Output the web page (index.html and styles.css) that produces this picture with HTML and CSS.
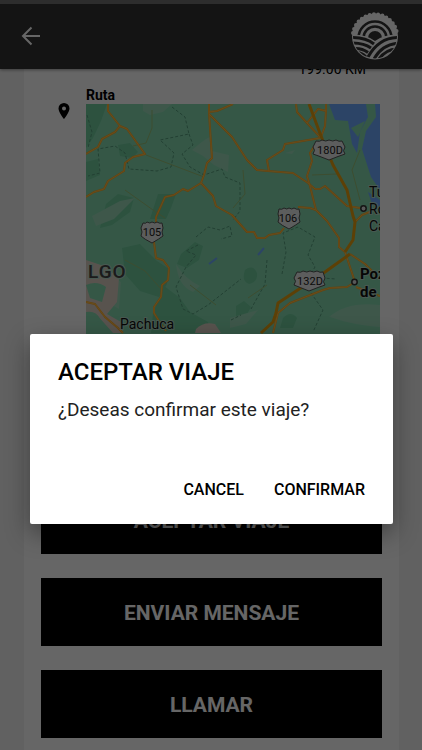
FILE: index.html
```html
<!DOCTYPE html>
<html lang="es">
<head>
<meta charset="utf-8">
<meta name="viewport" content="width=device-width, initial-scale=1">
<title>Aceptar viaje</title>
<link rel="stylesheet" href="styles.css">
</head>
<body>
<div class="app">
  <header class="topbar">
    <button class="back" type="button" aria-label="Volver">
      <svg width="20" height="20" viewBox="0 0 20 20" fill="none" stroke="currentColor" stroke-width="2"><path d="M20 10H3M11.500 1.500L3 10l8.500 8.500"/></svg>
    </button>
    <svg class="logo" viewBox="0 0 48 48" aria-hidden="true">
      <defs>
        <clipPath id="disc"><circle cx="24" cy="24.500" r="22"/></clipPath>
      </defs>
      <circle cx="24" cy="24.500" r="23" fill="#fff"/>
      <path d="M2 21A22.300 22.300 0 0 1 46 21" fill="none" stroke="#fff" stroke-width="4" stroke-linecap="round" stroke-dasharray="0 4.300"/>
      <g clip-path="url(#disc)">
        <g fill="none" stroke="#333" stroke-width="2.600">
          <circle cx="24" cy="26" r="16.500"/>
          <circle cx="24" cy="26" r="11.500"/>
        </g>
        <circle cx="24" cy="26" r="7" fill="#333"/>
        <path d="M0 22.500Q15 22 24 29Q33 22 48 22.500V48H0z" fill="#fff"/>
        <g fill="none" stroke="#333" stroke-width="3">
          <path d="M1 25.500Q15 25.500 23 32"/>
          <path d="M1 31Q13 31 20 36"/>
          <path d="M3 36.500Q11 36 17 40.500"/>
          <path d="M5 41Q10 40 15 45"/>
          <path d="M47 25.500Q28 25.500 17 45"/>
          <path d="M48 31Q31 32 23 47"/>
          <path d="M47 37Q35 37 28 47"/>
        </g>
      </g>
    </svg>
  </header>

  <main class="content">
    <section class="card">
      <p class="distance">199.00 KM</p>
      <div class="route">
        <svg class="pin" width="12" height="16" viewBox="0 0 12 16" aria-hidden="true"><path fill-rule="evenodd" d="M6 0a5.500 5.500 0 0 0-5.500 5.500C.5 9.500 6 16 6 16s5.500-6.500 5.500-10.500A5.500 5.500 0 0 0 6 0zm0 3.500a2 2 0 1 1 0 4 2 2 0 0 1 0-4z"/></svg>
        <div class="route-body">
          <h2 class="route-title">Ruta</h2>
          <svg class="map" viewBox="86 104 294 357" preserveAspectRatio="xMidYMin slice" role="img" aria-label="Mapa de la ruta">
            <defs>
              <g id="roads">
                <path d="M108 104v7l12 15 7 3 18 25-12 3-8 6-1 8-16 10-4 8-10 3-8 5M120 126l-5 6-13 7-4 8-12 7"/>
                <path d="M209 104v9l3 45-5 5-3 12-3 8-13 8-5-2-9 6-9 2-9 20v6M209 112l8-1 16-7M209 114l23 23 15 23 10 10 11 1 25 2 15 10 7 6h5l5-3 22 20 13 2"/>
                <path d="M201 183l12 13 3 10 7 4 9 5 15 17h7l3 6h8l4-3 11-2 4-5M154 242l2 16 7 2 6 8-1 12-6 5-1 12-7 10v6l5 8 7 10"/>
                <path d="M86 302l9 2 10 13 13 11 5 5M296 104l1 8 10 11 13 14M307 123l11-14 8 2v-7M326 111l-1 15-4 11M320 138l-35 6-2 6-16 10 2 11"/>
                <path d="M315 145l-5 8 2 8-5 15 3 10 6 24 5 5 6 6 12 17v9l6 5 10 30-8 5-17 1-7 2-33 13-12 10-5 20M298 207l12 1 6 2M350 254l15 10 15 15M356 287l24 9M355 222l7-7 10-4"/>
              </g>
            </defs>
            <rect x="86" y="104" width="294" height="357" fill="#84dab0"/>
            <g fill="#70cd9e">
              <path d="M86 104h21l-6 17-8 17-7 10z"/>
              <path d="M118 145l12-2 8 9-6 6-12-2zM86 162l12-3 2 16-14 6z"/>
              <path d="M106 204l12-10 16 4-4 14-18 13-12 3z"/>
              <path d="M158 194h18l-5 14-5 11h-16z"/>
              <path d="M122 248l18-4 17 17 12 8-2 15-8 13-19-6-15-17z"/>
              <path d="M181 254l14-12 8 4-4 14-12 8-10-4z"/>
              <path d="M164 286l16 12 10 14 18 10 3 11h-60l2-20z"/>
              <path d="M245 270q8-6 12 3 1 9-8 11-8-3-4-14zM283 318q8-8 14 0l-4 10h-13z"/>
              <path d="M236 306l8-5 7 6-5 9-10 3z"/>
            </g>
            <g fill="#9bd9b9">
              <path d="M143 104h29l-9 8-13 3-7-4zM192 150q14-12 18-13l2 14 17 4-1 17-14-7-11-9z"/>
              <path d="M92 216l28-15 15-3-21 21-18 7zM105 272l16 10-2 27-16-9zM176 264q9 15 24 22l-7 6q-15-6-17-28z"/>
              <path d="M329 317q18-16 51-12v22q-28-2-50-10zM285 153l10-3-3 4z"/>
              <path d="M230 318l28-8-12 14-16 4z"/>
            </g>
            <g fill="#dccfc4">
              <path d="M86 260l18 6 15 12-2 24-10 12 14 8 2 11h-10l-16-18-11-3z"/>
              <path d="M196 329q8-8 19-5l6 9h-26z"/>
            </g>
            <path fill="#84dab0" d="M86 285q11-5 20 2l-4 15-12-4zM86 312q10-2 14 7l-5 6-9-2z"/>
            <path fill="#6eabff" d="M329 104h37l2 13-8 15-3 21-5-9-4-23-13-1z"/>
            <path fill="#6eabff" d="M375 104h5v86l-9-13-9-28 4-18 10-14z"/>
            <path fill="#84dab0" d="M351 128l14-7-7 16z"/>
            <path fill="#6eabff" d="M368 192l12 8v12l-8-8z"/>
            <g class="borders">
              <path d="M172 107l13 10 4 17-29 6 14 13-3 14-14 4-28-2-4-16-10-7-17 3 2 24-12 3"/>
              <path d="M189 134l4 11-11 9 8 13 14 8 18-6 3 8 15 6v28l-7 9"/>
              <path d="M87 115l5 17-4 16M196 237l12-10 12 3 10-4 2 10-11 3M198 245l-12 6 10 4-10 12-10 20 7 22 10 5 15-9 33-26M231 320l10-5M282 274l4-22-3-19 15-6 17 10-7 18 7 12-6 10 27 2M267 260l-2 24-14 25M311 293l12 17-10 22"/>
            </g>
            <g class="minor">
              <path d="M152 110v18l-6 15-13 3M146 155l58 22M125 190l28 20 12 8M125 260l20 11 16 18M243 170l2 24-12 14M190 285l26 20M360 150l-8 20 8 30M312 175l25-1M248 298l19-13"/>
            </g>
            <use href="#roads" class="road-edge"/>
            <use href="#roads" class="road"/>
            <path class="highway" d="M309 104l12 32 12 29 14 25 6 26 2 6-2 18-8 12M350 254l-25 18-47 31-2 10-3 9-12 11"/>
            <path d="M209 264l8-6M258 255l6-7" stroke="#6eabff" stroke-width="2"/>
            <g class="shields">
              <path d="M316 141q4 1 6-1 4 2 7 0 4 2 7 0 3 2 6 1l3 6q-3 4 0 7-6 2-16 6-10-4-16-6 3-4 0-7z"/>
              <path d="M279 209q3 1 5-1 3 2 5 0 3 2 5 0 3 2 5 1l1 5q-2 4 0 8-4 3-11 7-8-4-11-7 2-4 0-8z"/>
              <path d="M143 223q3 1 4-1 3 2 5 0 3 2 5 0 3 2 5 1l1 5q-2 4 0 8-4 3-11 7-8-4-11-7 2-4 0-8z"/>
              <path d="M297 272q4 1 6-1 4 2 7 0 4 2 7 0 3 2 6 1l2 6q-3 4 0 7-6 2-16 6-10-4-15-6 3-4 0-7z"/>
            </g>
            <g class="shield-text">
              <text x="330" y="154">180D</text><text x="288" y="222">106</text><text x="152" y="236">105</text><text x="310" y="285">132D</text>
            </g>
            <g fill="#ddd" stroke="#333" stroke-width="1.500"><circle cx="363.500" cy="208.500" r="2.700"/><circle cx="354.500" cy="282" r="2.700"/></g>
            <g class="places">
              <text x="88" y="278" class="state">LGO</text><text x="120" y="329">Pachuca</text>
              <text x="369" y="197">Tu</text><text x="369" y="214">Ro</text><text x="369" y="231">Ca</text>
              <text x="360" y="279" class="city">Poz</text><text x="360" y="297" class="city">de</text>
            </g>
          </svg>
        </div>
      </div>
      <div class="actions">
        <button class="action" type="button">ACEPTAR VIAJE</button>
        <button class="action" type="button">ENVIAR MENSAJE</button>
        <button class="action" type="button">LLAMAR</button>
      </div>
    </section>
  </main>
</div>

<div class="scrim">
  <div class="dialog" role="dialog" aria-modal="true" aria-labelledby="dialog-title">
    <h1 class="dialog-title" id="dialog-title">ACEPTAR VIAJE</h1>
    <p class="dialog-text">¿Deseas confirmar este viaje?</p>
    <div class="dialog-actions">
      <button class="dialog-button" type="button">CANCEL</button>
      <button class="dialog-button" type="button">CONFIRMAR</button>
    </div>
  </div>
</div>
</body>
</html>
```
FILE: styles.css
```css
* { box-sizing: border-box; }
body {
  margin: 0;
  height: 100vh;
  overflow: hidden;
  font-family: Roboto, "Liberation Sans", sans-serif;
  color: #000;
}
h1, h2, p { margin: 0; }
button { font-family: inherit; border: 0; padding: 0; cursor: pointer; }

.app {
  height: 100%;
  display: flex;
  flex-direction: column;
  background: #f3f3f3;
}
.topbar {
  position: relative;
  z-index: 1;
  flex: none;
  display: flex;
  align-items: center;
  justify-content: space-between;
  padding: 8px 23px 9px 20px;
  border-top: 4px solid #707070;
  background: #333;
  box-shadow: 0 1px 3px rgba(0, 0, 0, .4);
}
.back { display: flex; background: none; color: #fff; }
.logo { width: 48px; height: 48px; }

.content { flex: 1; min-height: 0; padding: 0 23px 0 24px; }
.card { margin-top: -12px; padding: 0 17px; background: #fff; }
.distance {
  padding-right: 16px;
  font-size: 14px;
  line-height: 24px;
  text-align: right;
}
.route { display: flex; padding: 5px 2px 0 17px; }
.pin { flex: none; margin-top: 17px; }
.route-body { flex: 1; margin-left: 16px; }
.route-title { font-size: 14px; line-height: 18px; font-weight: 700; }
.map { display: block; width: 100%; height: 357px; }

.borders { fill: none; stroke: #58a07f; stroke-width: 1; stroke-dasharray: 3 2; }
.minor { fill: none; stroke: #99c078; stroke-width: 1; }
.road-edge, .road, .highway { fill: none; stroke-linejoin: round; }
.road-edge { stroke: #ffa520; stroke-width: 2; }
.road { stroke: #ffc04a; stroke-width: 1; }
.highway { stroke: #e8a010; stroke-width: 3; }
.shields { fill: #e6e8e8; stroke: #555; stroke-width: 1; }
.shield-text { font-size: 11px; text-anchor: middle; fill: #222; }
.places { font-size: 14px; fill: #111; stroke: #b5dcc8; stroke-width: 2; paint-order: stroke; }
.state { font-size: 19px; font-weight: 500; letter-spacing: 1px; fill: #444; }
.city { font-size: 15px; font-weight: 700; }

.actions { display: flex; flex-direction: column; gap: 24px; padding: 25px 0 24px; }
.action {
  height: 68px;
  padding-top: 2px;
  background: #000;
  color: #fff;
  font-size: 21px;
  font-weight: 700;
}

.scrim {
  position: absolute;
  inset: 0;
  z-index: 2;
  padding: 334px 29px 0 30px;
  background: rgba(0, 0, 0, .6);
}
.dialog {
  padding: 24px 28px 20px;
  border-radius: 2px;
  background: #fff;
  box-shadow: 0 9px 24px rgba(0, 0, 0, .4);
}
.dialog-title { font-size: 24px; line-height: 28px; font-weight: 500; }
.dialog-text { margin-top: 11px; font-size: 19px; line-height: 26px; color: #222; }
.dialog-actions { display: flex; justify-content: flex-end; gap: 30px; margin-top: 51px; }
.dialog-button {
  height: 30px;
  background: none;
  color: #000;
  font-size: 16px;
  font-weight: 500;
}
```
